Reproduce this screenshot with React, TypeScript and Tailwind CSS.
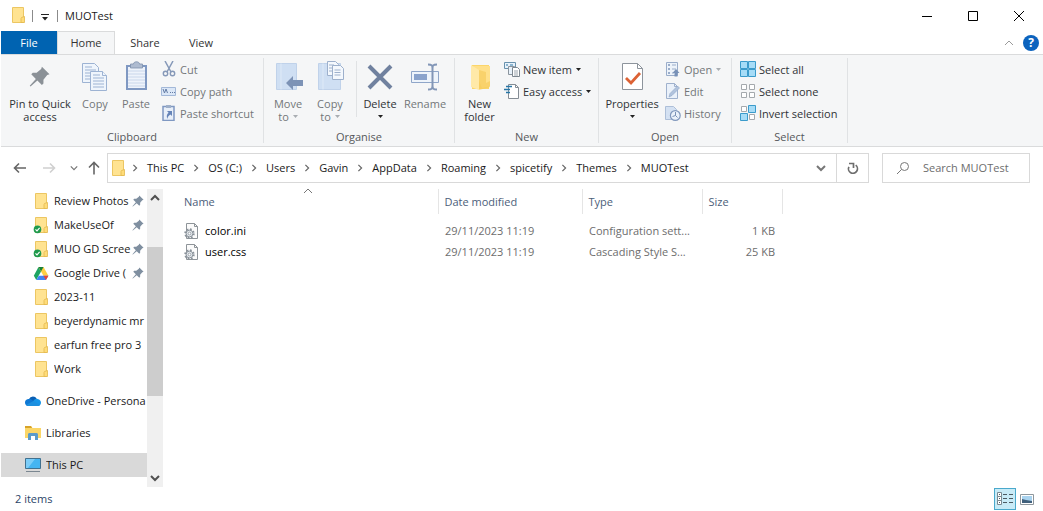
import type { ReactNode } from 'react';

function Folder({ synced = false }: { synced?: boolean }) {
  return (
    <svg className="h-[17px] w-4 shrink-0" viewBox="0 0 16 17">
      <path d="M2.500.5h11v15h-11z" fill="#ffe391" stroke="#ecc662" />
      <path d="M11.500 10.500l3-1v6h-3.500v-4z" fill="#ffdc78" stroke="#e2b74f" strokeWidth=".8" />
      {synced && (
        <g>
          <circle cx="4.500" cy="12.400" r="3.800" fill="#1f9a4c" />
          <path d="M2.500 12.300l1.500 1.600 2.600-3" fill="none" stroke="#fff" strokeWidth="1.100" />
        </g>
      )}
    </svg>
  );
}

const pinPath = 'M17 1l10 10-3 1-5 6v5l-2 2-6-6-9 8-1-1 8-9-6-6 2-2h5l6-5z';

function Pin() {
  return (
    <svg className="h-3 w-3 shrink-0" viewBox="0 0 28 28">
      <path d={pinPath} fill="#7f8fa0" />
    </svg>
  );
}

function Drive() {
  return (
    <svg className="h-[17px] w-4 shrink-0" viewBox="0 0 16 17">
      <path d="M5.500 2L.8 10.700l2.500 4.300L8 6.500z" fill="#1da462" />
      <path d="M5.500 2h5l4.900 8.700h-5z" fill="#ffcf44" />
      <path d="M5.700 10.700h9.700L12.900 15H3.300z" fill="#4285f4" />
      <path d="M10.400 10.700h5L12.900 15z" fill="#ea4335" />
      <path d="M5.500 2h5L8 6.500z" fill="#188038" />
    </svg>
  );
}

function Cloud() {
  return (
    <svg className="h-4 w-4 shrink-0" viewBox="0 0 16 16">
      <path d="M4 6a4.300 4.300 0 0 1 7.800-.1l-5 5z" fill="#0a5fb4" />
      <path d="M3.200 6C1 6.300 0 8 0 9.500 0 11.500 1.500 13 3.200 13L10 9 5.500 6z" fill="#0f78d4" />
      <path d="M8 8.500c1-2 3-3 4.500-2.500C15 6.500 16 8 16 9.700 16 11.600 14.600 13 13 13H7z" fill="#1795e8" />
      <path d="M1 12.100L8.500 8l6.600 4c-.6.700-1.300 1-2.100 1H3.200c-.9 0-1.700-.4-2.200-.900z" fill="#1c8fdf" />
    </svg>
  );
}

function Libraries() {
  return (
    <svg className="h-4 w-4 shrink-0" viewBox="0 0 16 16">
      <path d="M0 1h6l1.500 2H16v10H0z" fill="#fbd667" />
      <path d="M0 1h6l1 2H0z" fill="#d7a328" />
      <path d="M3 15V9.500C3 8.600 3.600 8 4.500 8h7c.9 0 1.500.6 1.500 1.500V15h-3v-4H6v4z" fill="#5b9bc9" />
      <path d="M6 11h4v4H6z" fill="#fff" />
    </svg>
  );
}

function Computer() {
  return (
    <svg className="h-4 w-4 shrink-0" viewBox="0 0 16 16">
      <path d="M.5 1.500h15v10H.5z" fill="#45b5f2" stroke="#41718f" />
      <path d="M1 2h9L3 11H1z" fill="#7ccdf8" />
      <path d="M1 14.500h14" stroke="#7b8791" />
    </svg>
  );
}

function ConfigFile() {
  return (
    <svg className="h-4 w-4 shrink-0" viewBox="0 0 16 16">
      <path d="M2.500.5h8l3 3v12h-11z" fill="#fbfbfb" stroke="#8e9499" />
      <path d="M10.500.5v3h3" fill="none" stroke="#8e9499" />
      <circle cx="5.500" cy="10.500" r="4.300" fill="none" stroke="#8a929a" strokeWidth="1.800" strokeDasharray="1.700 1.680" />
      <circle cx="5.500" cy="10.500" r="3.400" fill="#e5eaee" stroke="#8a929a" />
      <circle cx="5.500" cy="10.500" r="1.400" fill="#fff" stroke="#8a929a" strokeWidth=".8" />
    </svg>
  );
}

function Caret({ light = false }: { light?: boolean }) {
  return (
    <svg className="inline-block h-[3px] w-[5px] shrink-0" viewBox="0 0 5 3">
      <path d="M0 0h5L2.500 3z" fill={light ? '#a9adb2' : '#222'} />
    </svg>
  );
}

function Chevron({ dir, className }: { dir: 'up' | 'down' | 'right'; className: string }) {
  const d = { up: 'M1 7l4-4 4 4', down: 'M1 3l4 4 4-4', right: 'M3 1l4 4-4 4' }[dir];
  return (
    <svg className={className} viewBox="0 0 10 10" fill="none" stroke="currentColor">
      <path d={d} />
    </svg>
  );
}

const bigIcons = {
  pin: <path d={pinPath} transform="translate(5 5) scale(.76)" fill="#8b9197" />,
  copy: (
    <g fill="#eff5fc" stroke="#9db3d3">
      <path d="M3.500 2.500h12l4 4v15h-16z" />
      <path d="M6 6h7M6 9h11M6 12h11M6 15h11M6 18h11" />
      <path d="M11.500 10.500h12l4 4v15h-16z" />
      <path d="M23.500 10.500v4h4" />
      <path d="M14 14h7M14 17h11M14 20h11M14 23h11M14 26h11" />
    </g>
  ),
  paste: (
    <g>
      <path d="M6 4h21v25H6z" fill="#7f98c2" />
      <path d="M8 6h17v21H8z" fill="#eef3fb" />
      <path d="M8 10h17M8 13h17M8 16h17M8 19h17M8 22h17M8 25h17" stroke="#c9d6ea" />
      <path d="M10.500 7V3h3c0-3 6-3 6 0h3v4z" fill="#aebbd0" stroke="#7e90ac" strokeWidth=".8" />
    </g>
  ),
  move: (
    <g>
      <path d="M4.500 2.500h20v26h-20z" fill="#cfdff3" stroke="#c0d2ea" />
      <path d="M9 2.500v26" stroke="#dfeaf7" />
      <path d="M14 22l7-7v4h10v6H21v4z" fill="#7d93b6" />
    </g>
  ),
  copyTo: (
    <g>
      <path d="M4.500 2.500h22v26h-22z" fill="#cfdff3" stroke="#c0d2ea" />
      <path d="M9 2.500v26" stroke="#dfeaf7" />
      <g fill="#f4f8fd" stroke="#9db0cc">
        <path d="M13.500.5h8l3 3v11h-11z" />
        <path d="M18.500 4.500h8l3 3v11h-11z" />
        <path d="M20.500 9h6M20.500 11.500h6M20.500 14h6M15 4h5M15 7h3M15 10h3" />
      </g>
    </g>
  ),
  del: <path d="M5 5l22 22M27 5L5 27" stroke="#70819f" strokeWidth="4" fill="none" />,
  rename: (
    <g fill="none" stroke="#8fa6c9">
      <path d="M2.500 10.500h27v11h-27z" fill="#eef4fb" />
      <path d="M5 13h13v6H5z" fill="#8aa3cc" stroke="none" />
      <path d="M19 3.500c4 0 4.500 1 4.500 4v17c0 3-.5 4-4.500 4M28 3.500c-4 0-4.500 1-4.500 4v17c0 3 .5 4 4.500 4" strokeWidth="2" stroke="#8296b7" />
    </g>
  ),
  folder: (
    <g>
      <path d="M8 4h17v24H8z" fill="#fbd56b" />
      <path d="M9 5h17v20l-8 2z" fill="#ffe08a" />
      <path d="M7 4l8 5v20l-8-3z" fill="#ffe9a8" />
      <path d="M15 9v20l11-3V20l-4 2V11z" fill="#f6cb5a" opacity=".65" />
    </g>
  ),
  props: (
    <g>
      <path d="M6.500 2.500h15l5 5v21h-20z" fill="#fff" stroke="#8d949c" />
      <path d="M21.500 2.500v5h5" fill="none" stroke="#8d949c" />
      <path d="M10 17l5 5 9-10" fill="none" stroke="#dc6235" strokeWidth="2.800" />
    </g>
  ),
};

function BigButton({ icon, lines, width, muted = false, caret }: {
  icon: keyof typeof bigIcons; lines: string[]; width: string; muted?: boolean; caret?: 'inline' | 'below';
}) {
  return (
    <button className={`${width} flex shrink-0 flex-col items-center whitespace-nowrap ${muted ? 'text-[#737679]' : 'text-[#303336]'}`}>
      <svg className="mb-1 h-8 w-8" viewBox="0 0 32 32">{bigIcons[icon]}</svg>
      {lines.map((line, i) => (
        <span key={line} className="flex h-[13px] items-center gap-1">
          {line}
          {caret === 'inline' && i === lines.length - 1 && <Caret light />}
        </span>
      ))}
      {caret === 'below' && <span className="flex h-[13px] items-center"><Caret /></span>}
    </button>
  );
}

const smallIcons = {
  cut: (
    <g fill="none" stroke="#8598b8">
      <path d="M4 0l6 11M12 0L6 11" strokeWidth="1.500" />
      <circle cx="4.500" cy="12.500" r="2.200" strokeWidth="1.400" />
      <circle cx="11.500" cy="12.500" r="2.200" strokeWidth="1.400" />
    </g>
  ),
  path: (
    <g>
      <path d="M.5 4.500h14v8H.5z" fill="#dbe7f7" stroke="#a3b8d8" />
      <path d="M2 6l1.500 4L5 6l1.500 4M9 9.500h1M11 9.500h1M13 9.500h1" fill="none" stroke="#647ca5" />
    </g>
  ),
  shortcut: (
    <g>
      <path d="M2 1.500h11v14H2z" fill="#e8eff9" stroke="#7f98c2" strokeWidth="1.500" />
      <path d="M5 0h5v3H5z" fill="#9eafc9" />
      <path d="M6 6h5v5L9.400 9.400C7.500 10.500 6.500 12 6.500 14c-1.500-3-.5-5 1.100-6.200z" fill="#6684b8" />
    </g>
  ),
  item: (
    <g fill="#e8f2fb" stroke="#6891ad">
      <path d="M.5 1.500h11v6H.5z" />
      <path d="M2 4h2M6 4h3" stroke="#3179a5" />
      <path d="M4.500 5.500h6v8h-6z" stroke="#8b949d" />
      <path d="M8.500 6.500h5l2 2v7h-7z" stroke="#7d8790" fill="#fff" />
      <path d="M10 10h4M10 12h4M10 14h4" stroke="#9ba5ae" />
    </g>
  ),
  access: (
    <g fill="none">
      <path d="M4.500 1.500h7l3 3v11h-10z" fill="#fff" stroke="#858d95" />
      <path d="M11.500 1.500v3h3" stroke="#858d95" />
      <path d="M2 3.500h6M0 6.500h6M2 9.500h4" stroke="#2676a6" strokeWidth="1.400" />
    </g>
  ),
  open: (
    <g fill="#edf3fa" stroke="#9aadca">
      <path d="M1.500 1.500h11v13h-11z" />
      <path d="M3 4h2M3 8h2M3 12h2" strokeWidth="2" />
      <path d="M7 4h4M7 8h4M7 12h2" />
      <path d="M9.500 15.500V12h-2l3.500-4 3.500 4h-2v3.500z" fill="#7891b7" stroke="none" />
    </g>
  ),
  edit: (
    <g>
      <path d="M1.500.5h8l3 3v12h-11z" fill="#eaf1fa" stroke="#9fb1cd" />
      <path d="M9.500.5v3h3" fill="none" stroke="#9fb1cd" />
      <path d="M4 14l1-3.500L12.500 3l2 2L7 12.500z" fill="#b1c3dd" stroke="#8da4c6" strokeWidth=".6" />
    </g>
  ),
  history: (
    <g>
      <path d="M.5 1.500h8l3 3v10H.5z" fill="#d4e1f2" stroke="#adbfd8" />
      <circle cx="10.300" cy="10.500" r="4.900" fill="#eaf1fa" stroke="#8299bd" strokeWidth="1.200" />
      <path d="M10.500 7v3.500l-3 1M10.500 10.500l2 2" stroke="#7890b5" fill="none" />
    </g>
  ),
  all: (
    <g fill="#a6dcf7" stroke="#3b9bcb">
      <path d="M.5.5h7v7h-7zM8.500.5h7v7h-7zM.5 8.500h7v7h-7zM8.500 8.500h7v7h-7z" />
    </g>
  ),
  none: <path d="M1.500 1.500h5v5h-5zM9.500 1.500h5v5h-5zM1.500 9.500h5v5h-5zM9.500 9.500h5v5h-5z" fill="#fff" stroke="#a4a9ad" />,
  invert: (
    <g>
      <path d="M1.500 1.500h5v5h-5zM9.500 9.500h5v5h-5z" fill="#fff" stroke="#a4a9ad" />
      <path d="M8.500.5h7v7h-7zM.5 8.500h7v7h-7z" fill="#a6dcf7" stroke="#3b9bcb" />
    </g>
  ),
};

function SmallButton({ icon, label, muted = false, caret = false }: {
  icon: keyof typeof smallIcons; label: string; muted?: boolean; caret?: boolean;
}) {
  return (
    <button className={`flex h-[22px] items-center whitespace-nowrap ${muted ? 'text-[#737679]' : 'text-[#303336]'}`}>
      <svg className="mr-[3px] h-4 w-4" viewBox="0 0 16 16">{smallIcons[icon]}</svg>
      {label}
      {caret && <span className="ml-1 flex"><Caret light={muted} /></span>}
    </button>
  );
}

function Group({ title, width, children }: { title: string; width: string; children: ReactNode }) {
  return (
    <section className={`${width} flex shrink-0 flex-col py-[3px]`}>
      <div className="flex flex-1 flex-col border-r border-[#e0e2e4]">
        <div className="flex h-[72px] items-start">{children}</div>
        <h2 className="text-center text-[#55585b]">{title}</h2>
      </div>
    </section>
  );
}

function Ribbon() {
  return (
    <div className="flex h-[93px] overflow-hidden border-y border-[#dadbdc] bg-[#f5f6f7] leading-[13px]">
      <Group title="Clipboard" width="w-[263px]">
        <div className="flex pt-[3px]">
          <BigButton icon="pin" lines={['Pin to Quick', 'access']} width="w-[78px]" />
          <BigButton icon="copy" lines={['Copy']} width="w-[32px]" muted />
          <BigButton icon="paste" lines={['Paste']} width="w-[50px]" muted />
        </div>
        <div>
          <SmallButton icon="cut" label="Cut" muted />
          <SmallButton icon="path" label="Copy path" muted />
          <SmallButton icon="shortcut" label="Paste shortcut" muted />
        </div>
      </Group>
      <Group title="Organise" width="w-[191px]">
        <div className="flex pt-[3px]">
          <BigButton icon="move" lines={['Move', 'to']} width="w-12" muted caret="inline" />
          <BigButton icon="copyTo" lines={['Copy', 'to']} width="w-9" muted caret="inline" />
          <div className="mr-px ml-2 h-14 w-px bg-[#e0e2e4]" />
          <BigButton icon="del" lines={['Delete']} width="w-11" caret="below" />
          <BigButton icon="rename" lines={['Rename']} width="w-[46px]" muted />
        </div>
      </Group>
      <Group title="New" width="w-36">
        <div className="pt-[3px]">
          <BigButton icon="folder" lines={['New', 'folder']} width="w-[49px]" />
        </div>
        <div>
          <SmallButton icon="item" label="New item" caret />
          <SmallButton icon="access" label="Easy access" caret />
        </div>
      </Group>
      <Group title="Open" width="w-[133px]">
        <div className="pt-[3px]">
          <BigButton icon="props" lines={['Properties']} width="w-[66px]" caret="below" />
        </div>
        <div>
          <SmallButton icon="open" label="Open" muted caret />
          <SmallButton icon="edit" label="Edit" muted />
          <SmallButton icon="history" label="History" muted />
        </div>
      </Group>
      <Group title="Select" width="w-[116px]">
        <div className="pl-2">
          <SmallButton icon="all" label="Select all" />
          <SmallButton icon="none" label="Select none" />
          <SmallButton icon="invert" label="Invert selection" />
        </div>
      </Group>
    </div>
  );
}

function TitleBar() {
  return (
    <header className="flex h-[31px] items-center justify-between pr-px pl-[9px]">
      <div className="flex items-center">
        <Folder />
        <span className="ml-[6px] h-3 w-px bg-[#8b8b8b]" />
        <button aria-label="Customise Quick Access Toolbar" className="mx-2 flex h-3 w-2 items-end">
          <svg className="h-2 w-2" viewBox="0 0 8 8"><path d="M0 .5h8" stroke="#222" /><path d="M1 3h6L4 6.500z" fill="#222" /></svg>
        </button>
        <span className="h-3 w-px bg-[#8b8b8b]" />
        <h1 className="ml-[7px]">MUOTest</h1>
      </div>
      <div className="flex">
        {[['Minimise', 'M0 5.500h10'], ['Maximise', 'M.5.5h9v9h-9z'], ['Close', 'M0 0l10 10M10 0L0 10']].map(([name, d]) => (
          <button key={name} aria-label={name} className="flex h-[31px] w-[46px] items-center justify-center">
            <svg className="h-[10px] w-[10px]" viewBox="0 0 10 10" fill="none" stroke="#000"><path d={d} /></svg>
          </button>
        ))}
      </div>
    </header>
  );
}

function Tabs() {
  return (
    <nav className="flex h-[23px] items-stretch text-[#333]">
      <button className="w-14 bg-[#0063b1] text-white">File</button>
      <button className="-mb-px w-[58px] border border-b-0 border-[#dadbdc] bg-[#f5f6f7] pb-px">Home</button>
      <button className="w-[60px]">Share</button>
      <button className="w-[52px]">View</button>
      <div className="ml-auto flex items-center gap-[9px] pr-1">
        <button aria-label="Minimise the Ribbon"><Chevron dir="up" className="h-[10px] w-[10px] text-[#9a9a9a]" /></button>
        <button aria-label="Help" className="flex h-4 w-4 items-center justify-center rounded-full bg-[#0c63be] text-[12px] font-bold text-white">?</button>
      </div>
    </nav>
  );
}

const crumbs = ['This PC', 'OS (C:)', 'Users', 'Gavin', 'AppData', 'Roaming', 'spicetify', 'Themes', 'MUOTest'];

function Arrow({ d, label, color }: { d: string; label: string; color: string }) {
  return (
    <button aria-label={label} className="flex">
      <svg className="h-[14px] w-[14px]" viewBox="0 0 14 14" fill="none" stroke={color} strokeWidth="1.600"><path d={d} /></svg>
    </button>
  );
}

function AddressBar() {
  return (
    <div className="flex h-[42px] items-center pr-[13px] pl-3">
      <div className="flex w-[94px] shrink-0 items-center">
        <Arrow label="Back" color="#666" d="M13 7H1.500M6 2.500L1.500 7 6 11.500" />
        <span className="ml-[15px] flex"><Arrow label="Forward" color="#d0d0d0" d="M1 7h11.500M8 2.500L12.500 7 8 11.500" /></span>
        <button aria-label="Recent locations" className="ml-[14px]"><Chevron dir="down" className="h-2 w-2 stroke-[1.5] text-[#777]" /></button>
        <span className="ml-[9px] flex"><Arrow label="Up" color="#666" d="M7 13.500V1.500M2 6.500l5-5 5 5" /></span>
      </div>
      <div className="flex h-[30px] min-w-0 flex-1 items-center border border-[#d9d9d9] pl-[2px]">
        <Folder />
        <ol className="ml-[5px] flex min-w-0 flex-1 items-center overflow-hidden">
          {crumbs.map((crumb) => (
            <li key={crumb} className="flex shrink-0 items-center">
              <Chevron dir="right" className="h-2 w-2 stroke-[1.5] text-[#666]" />
              <a href="#" className="px-2">{crumb}</a>
            </li>
          ))}
        </ol>
        <button aria-label="Previous locations" className="px-[10px]"><Chevron dir="down" className="h-[10px] w-[10px] stroke-2 text-[#777]" /></button>
        <button aria-label="Refresh" className="flex h-full w-8 items-center justify-center border-l border-[#d9d9d9]">
          <svg className="h-[14px] w-[14px]" viewBox="0 0 14 14" fill="none" stroke="#6d6d6d" strokeWidth="1.700"><path d="M2.900 5.800a4.500 4.500 0 1 0 6.800-1.600" /><path d="M3 2.500h4.500V7" /></svg>
        </button>
      </div>
      <label className="ml-[13px] flex h-[30px] w-[148px] shrink-0 items-center border border-[#d9d9d9] pl-[14px]">
        <svg className="h-3 w-3 shrink-0" viewBox="0 0 12 12" fill="none" stroke="#777"><circle cx="7.500" cy="4.500" r="4" /><path d="M4.500 7.500L0 12" /></svg>
        <input aria-label="Search MUOTest" placeholder="Search MUOTest" className="ml-[14px] min-w-0 flex-1 outline-none placeholder:text-[#6d6d6d]" />
      </label>
    </div>
  );
}

const quick = [
  { name: 'Review Photos', icon: <Folder />, pinned: true },
  { name: 'MakeUseOf', icon: <Folder synced />, pinned: true },
  { name: 'MUO GD Scree', icon: <Folder synced />, pinned: true },
  { name: 'Google Drive (', icon: <Drive />, pinned: true },
  { name: '2023-11', icon: <Folder />, pinned: false },
  { name: 'beyerdynamic mr', icon: <Folder />, pinned: false },
  { name: 'earfun free pro 3', icon: <Folder />, pinned: false },
  { name: 'Work', icon: <Folder />, pinned: false },
];

const roots = [
  { name: 'OneDrive - Persona', icon: <Cloud />, selected: false },
  { name: 'Libraries', icon: <Libraries />, selected: false },
  { name: 'This PC', icon: <Computer />, selected: true },
];

function Sidebar() {
  return (
    <aside className="flex w-[162px] shrink-0">
      <nav className="flex min-w-0 flex-1 flex-col gap-2 pb-[10px]">
        <ul>
          {quick.map(({ name, icon, pinned }) => (
            <li key={name} className="flex h-6 items-center pl-8">
              {icon}
              <a href="#" className="ml-[5px] min-w-0 flex-1 overflow-hidden whitespace-nowrap">{name}</a>
              {pinned && <span className="mr-[3px] flex"><Pin /></span>}
            </li>
          ))}
        </ul>
        {roots.map(({ name, icon, selected }) => (
          <div key={name} className={`flex h-6 items-center pl-6 ${selected ? 'bg-[#d9d9d9]' : ''}`}>
            {icon}
            <a href="#" className="ml-[5px] min-w-0 flex-1 overflow-hidden whitespace-nowrap">{name}</a>
          </div>
        ))}
      </nav>
      <div className="flex w-4 flex-col items-center bg-[#f0f0f0]">
        <Chevron dir="up" className="my-1 h-[10px] w-[10px] shrink-0 stroke-2 text-[#505050]" />
        <div className="flex w-full flex-1 flex-col pt-10">
          <div className="h-[149px] w-full bg-[#cdcdcd]" />
        </div>
        <Chevron dir="down" className="my-1 h-[10px] w-[10px] shrink-0 stroke-2 text-[#505050]" />
      </div>
    </aside>
  );
}

const files = [
  { name: 'color.ini', date: '29/11/2023 11:19', type: 'Configuration sett...', size: '1 KB' },
  { name: 'user.css', date: '29/11/2023 11:19', type: 'Cascading Style S...', size: '25 KB' },
];

function FileList() {
  return (
    <main className="min-w-0 flex-1 pl-[9px]">
      <table className="w-[610px] table-fixed border-collapse text-left whitespace-nowrap">
        <colgroup>
          <col className="w-[266px]" /><col className="w-36" /><col className="w-[120px]" /><col className="w-20" />
        </colgroup>
        <thead>
          <tr className="h-[25px] text-[#4c607a]">
            <th className="relative border-r border-[#e5e5e5] pl-3 font-normal">
              Name
              <Chevron dir="up" className="absolute top-[-3px] left-[131px] h-[10px] w-[10px] text-[#777]" />
            </th>
            <th className="border-r border-[#e5e5e5] pl-[6px] font-normal">Date modified</th>
            <th className="border-r border-[#e5e5e5] pl-[6px] font-normal">Type</th>
            <th className="border-r border-[#e5e5e5] pl-[6px] font-normal">Size</th>
          </tr>
        </thead>
        <tbody className="text-[#6d6d6d]">
          <tr className="h-[6px]" aria-hidden="true"><td colSpan={4} /></tr>
          {files.map((f) => (
            <tr key={f.name} className="h-[21px]">
              <td className="pl-3"><span className="flex items-center gap-[5px] text-black"><ConfigFile />{f.name}</span></td>
              <td className="pl-[7px]">{f.date}</td>
              <td className="pl-[7px]">{f.type}</td>
              <td className="pr-[7px] text-right">{f.size}</td>
            </tr>
          ))}
        </tbody>
      </table>
    </main>
  );
}

function StatusBar() {
  return (
    <footer className="flex h-6 items-center justify-between pr-[9px] pl-[14px] text-[#2b4468]">
      <span>2 items</span>
      <div className="flex items-center gap-[4px]">
        <button aria-label="Details view" className="flex h-[22px] w-[22px] items-center justify-center border border-[#4aa9cc] bg-[#c8ebf7]">
          <svg className="h-[14px] w-4" viewBox="0 0 16 14" fill="#fff" stroke="#7a8a92">
            <path d="M.5.500h4v4h-4zM.5 4.500h4v4h-4zM.5 8.500h4v4h-4z" />
            <path d="M2 2.500h1M2 6.500h1M2 10.500h1M6 2.500h4M12 2.500h4M6 6.500h4M12 6.500h4M6 10.500h4M12 10.500h4" stroke="#4b5b63" />
          </svg>
        </button>
        <button aria-label="Large icons view">
          <svg className="h-[11px] w-[14px]" viewBox="0 0 14 11">
            <path d="M.5.500h13v10H.5z" fill="#fff" stroke="#8e979d" />
            <path d="M2 2h10v7H2z" fill="#a9d3ef" />
            <path d="M2 5l4 1 6 1v2H2z" fill="#40607c" />
          </svg>
        </button>
      </div>
    </footer>
  );
}

export default function App() {
  return (
    <div className="flex min-h-screen flex-col bg-white pl-px font-['Open_Sans','Noto_Sans',sans-serif] text-[11px] leading-4 text-[#1a1a1a]">
      <TitleBar />
      <Tabs />
      <Ribbon />
      <AddressBar />
      <div className="flex flex-1">
        <Sidebar />
        <FileList />
      </div>
      <StatusBar />
    </div>
  );
}
